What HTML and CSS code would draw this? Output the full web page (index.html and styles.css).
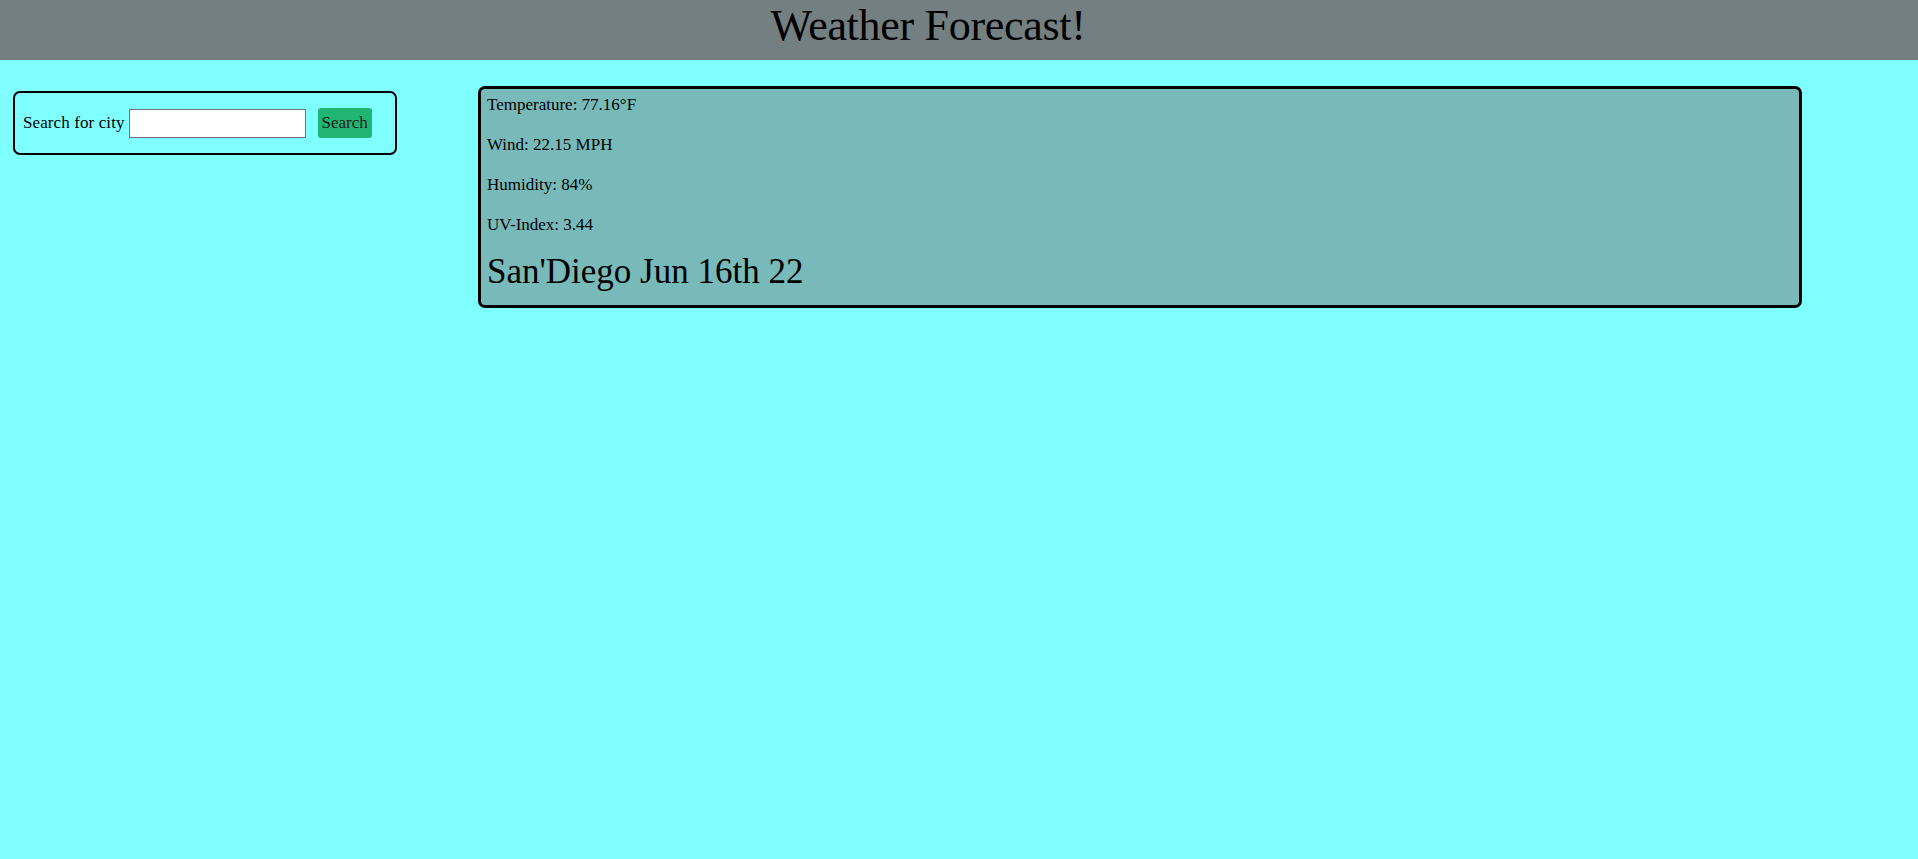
FILE: index.html
```html
<!DOCTYPE html>
<html lang="en">
<head>
<meta charset="utf-8">
<title>Weather Forecast!</title>
<link rel="stylesheet" href="styles.css">
</head>
<body>
<header class="top-bar">
  <h1 class="title">Weather Forecast!</h1>
</header>
<main class="layout">
  <section class="search-box">
    <label class="search-label" for="city">Search for city</label>
    <input class="search-input" id="city" type="text">
    <button class="search-btn" type="button">Search</button>
  </section>
  <section class="current-card">
    <p class="stat">Temperature: 77.16°F</p>
    <p class="stat">Wind: 22.15 MPH</p>
    <p class="stat">Humidity: 84%</p>
    <p class="stat">UV-Index: 3.44</p>
    <h2 class="city-date">San'Diego Jun 16th 22</h2>
  </section>
</main>
</body>
</html>
```
FILE: styles.css
```css
html, body {
  margin: 0;
  padding: 0;
}
body {
  background: #7fffff;
  font-family: "Liberation Serif", "Times New Roman", serif;
  color: #000;
  min-height: 859px;
}
.top-bar {
  background: #737f80;
  height: 60px;
  box-sizing: border-box;
  padding: 0 62px 8px 0;
}
.title {
  margin: 0;
  text-align: center;
  font-weight: normal;
  font-size: 44px;
  line-height: 52px;
  letter-spacing: -0.3px;
}
.layout {
  display: flex;
  align-items: flex-start;
  padding: 26px 0 0 13px;
  gap: 81px;
}
.search-box {
  margin-top: 5px;
  width: 384px;
  height: 64px;
  box-sizing: border-box;
  border: 2px solid #000;
  border-radius: 7px;
  padding: 0 8px;
  display: flex;
  align-items: center;
  font-size: 17px;
}
.search-label {
  letter-spacing: 0.1px;
}
.search-input {
  margin: 0 0 0 4px;
  width: 177px;
  height: 29px;
  box-sizing: border-box;
  border: 1px solid #767676;
  background: #fff;
  padding: 0 4px;
  font-size: 15px;
}
.search-btn {
  margin-left: 12px;
  width: 54px;
  height: 30px;
  border: none;
  border-radius: 3px;
  background: #21b573;
  color: #1a1a1a;
  font-family: "Liberation Serif", "Times New Roman", serif;
  font-size: 17px;
  padding: 0;
}
.current-card {
  width: 1324px;
  box-sizing: border-box;
  border: 3px solid #000;
  border-radius: 7px;
  background: #78b9b9;
  padding: 6px 6px 16px;
}
.stat {
  margin: 0 0 20px;
  font-size: 17px;
  line-height: 20px;
}
.city-date {
  margin: 0;
  font-weight: normal;
  font-size: 35px;
  line-height: 34px;
}
```
